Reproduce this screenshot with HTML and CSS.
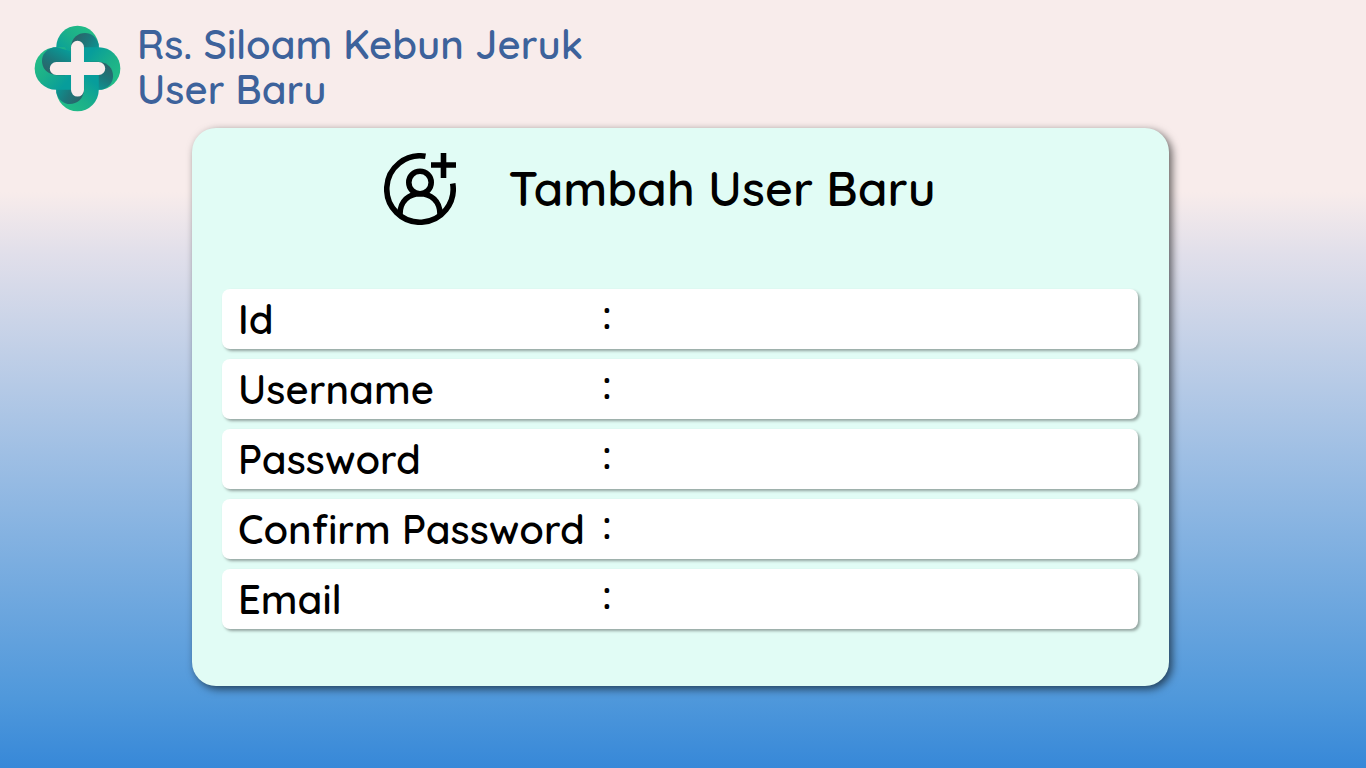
FILE: index.html
```html
<!DOCTYPE html>
<html lang="id">
<head>
<meta charset="utf-8">
<meta name="viewport" content="width=device-width, initial-scale=1">
<title>Rs. Siloam Kebun Jeruk - User Baru</title>
<link rel="stylesheet" href="styles.css">
</head>
<body class="page">
<header class="brand">
  <svg class="brand-logo" viewBox="30 27 262 262" aria-hidden="true">
    <defs>
      <linearGradient id="lobe" gradientUnits="userSpaceOnUse" x1="196" y1="35" x2="120" y2="125">
        <stop offset="0" stop-color="#22bd87"/><stop offset=".45" stop-color="#1cb089"/><stop offset="1" stop-color="#079d9b"/>
      </linearGradient>
      <linearGradient id="fold" gradientUnits="userSpaceOnUse" x1="146" y1="70" x2="224" y2="115">
        <stop offset="0" stop-color="#2c6368"/><stop offset=".45" stop-color="#1c777a"/><stop offset="1" stop-color="#089b98"/>
      </linearGradient>
      <g id="petal">
        <path d="M97 94A64 65 0 0 1 225 94L225 120L161 158L97 158Z" fill="url(#lobe)"/>
        <path d="M141 96C143 64 163 51 184 51C203 51 219 64 225 86V96L212 140H161L141 120Z" fill="url(#fold)"/>
      </g>
    </defs>
    <use href="#petal"/>
    <use href="#petal" transform="rotate(90 161 158)"/>
    <use href="#petal" transform="rotate(180 161 158)"/>
    <use href="#petal" transform="rotate(270 161 158)"/>
    <path d="M161 94V223M97 158H225" stroke="#f8eceb" stroke-width="39" stroke-linecap="round"/>
  </svg>
  <h1 class="brand-title"><span class="brand-line">Rs. Siloam Kebun Jeruk</span><span class="brand-line">User Baru</span></h1>
</header>
<main class="card">
  <div class="card-head">
    <svg class="user-icon" viewBox="0 0 72 72" fill="none" stroke="#000" stroke-width="5.600" aria-hidden="true">
      <path d="M41.500 3.300A33.200 33.200 0 1 0 68.700 30.500"/>
      <circle cx="36" cy="29.500" r="11.200"/>
      <path d="M16 61C16 48 25 40.700 36 40.700S56 48 56 61M47 12H72M59.500 0V25"/>
    </svg>
    <h2 class="card-title">Tambah User Baru</h2>
  </div>
  <form class="fields">
    <div class="field"><label class="label" for="id">Id</label><span class="colon">:</span><input class="input" id="id" type="text"></div>
    <div class="field"><label class="label" for="username">Username</label><span class="colon">:</span><input class="input" id="username" type="text"></div>
    <div class="field"><label class="label" for="password">Password</label><span class="colon">:</span><input class="input" id="password" type="password"></div>
    <div class="field"><label class="label" for="confirm">Confirm Password</label><span class="colon">:</span><input class="input" id="confirm" type="password"></div>
    <div class="field"><label class="label" for="email">Email</label><span class="colon">:</span><input class="input" id="email" type="email"></div>
  </form>
</main>
</body>
</html>
```
FILE: styles.css
```css
* { box-sizing: border-box; }
.page {
  margin: 0;
  min-height: 100vh;
  padding: 22px 0 82px;
  font-family: Quicksand, Lato, sans-serif;
  font-weight: 600;
  color: #000;
  background: linear-gradient(#f8eceb 25%, #e1dfea 33%, #9fbfe4 59%, #4f98db 91%, #3788d8);
}
.brand {
  display: flex;
  align-items: center;
  gap: 16px;
  padding-left: 34px;
}
.brand-logo { width: 87px; height: 87px; }
.brand-title {
  margin: 0;
  padding-bottom: 2px;
  font-size: 40px;
  line-height: 45px;
  font-weight: 600;
  color: #3d629b;
}
.brand-line { display: block; }
.card {
  margin: 14px 197px 0 192px;
  padding: 25px 31px 57px 30px;
  border-radius: 24px;
  background: #e1fcf5;
  box-shadow: 3px 3px 8px rgba(0, 0, 0, .6);
}
.card-head {
  display: flex;
  align-items: center;
  justify-content: center;
  gap: 52px;
  padding-right: 40px;
}
.user-icon { width: 72px; height: 72px; }
.card-title { margin: 0; padding-bottom: 2px; font-size: 48px; line-height: 60px; font-weight: 600; }
.fields { display: grid; gap: 10px; margin-top: 64px; }
.field {
  display: grid;
  grid-template-columns: 361px 16px 1fr;
  align-items: center;
  height: 60px;
  padding: 0 16px;
  border-radius: 8px;
  background: #fff;
  box-shadow: 2px 2px 3px rgba(0, 0, 0, .35);
}
.label { font-size: 40px; line-height: 56px; }
.colon { font-size: 40px; line-height: 48px; padding-bottom: 10px; text-align: center; }
.input {
  min-width: 0;
  height: 48px;
  border: 0;
  outline: 0;
  background: transparent;
  font: inherit;
  font-size: 36px;
}
```
